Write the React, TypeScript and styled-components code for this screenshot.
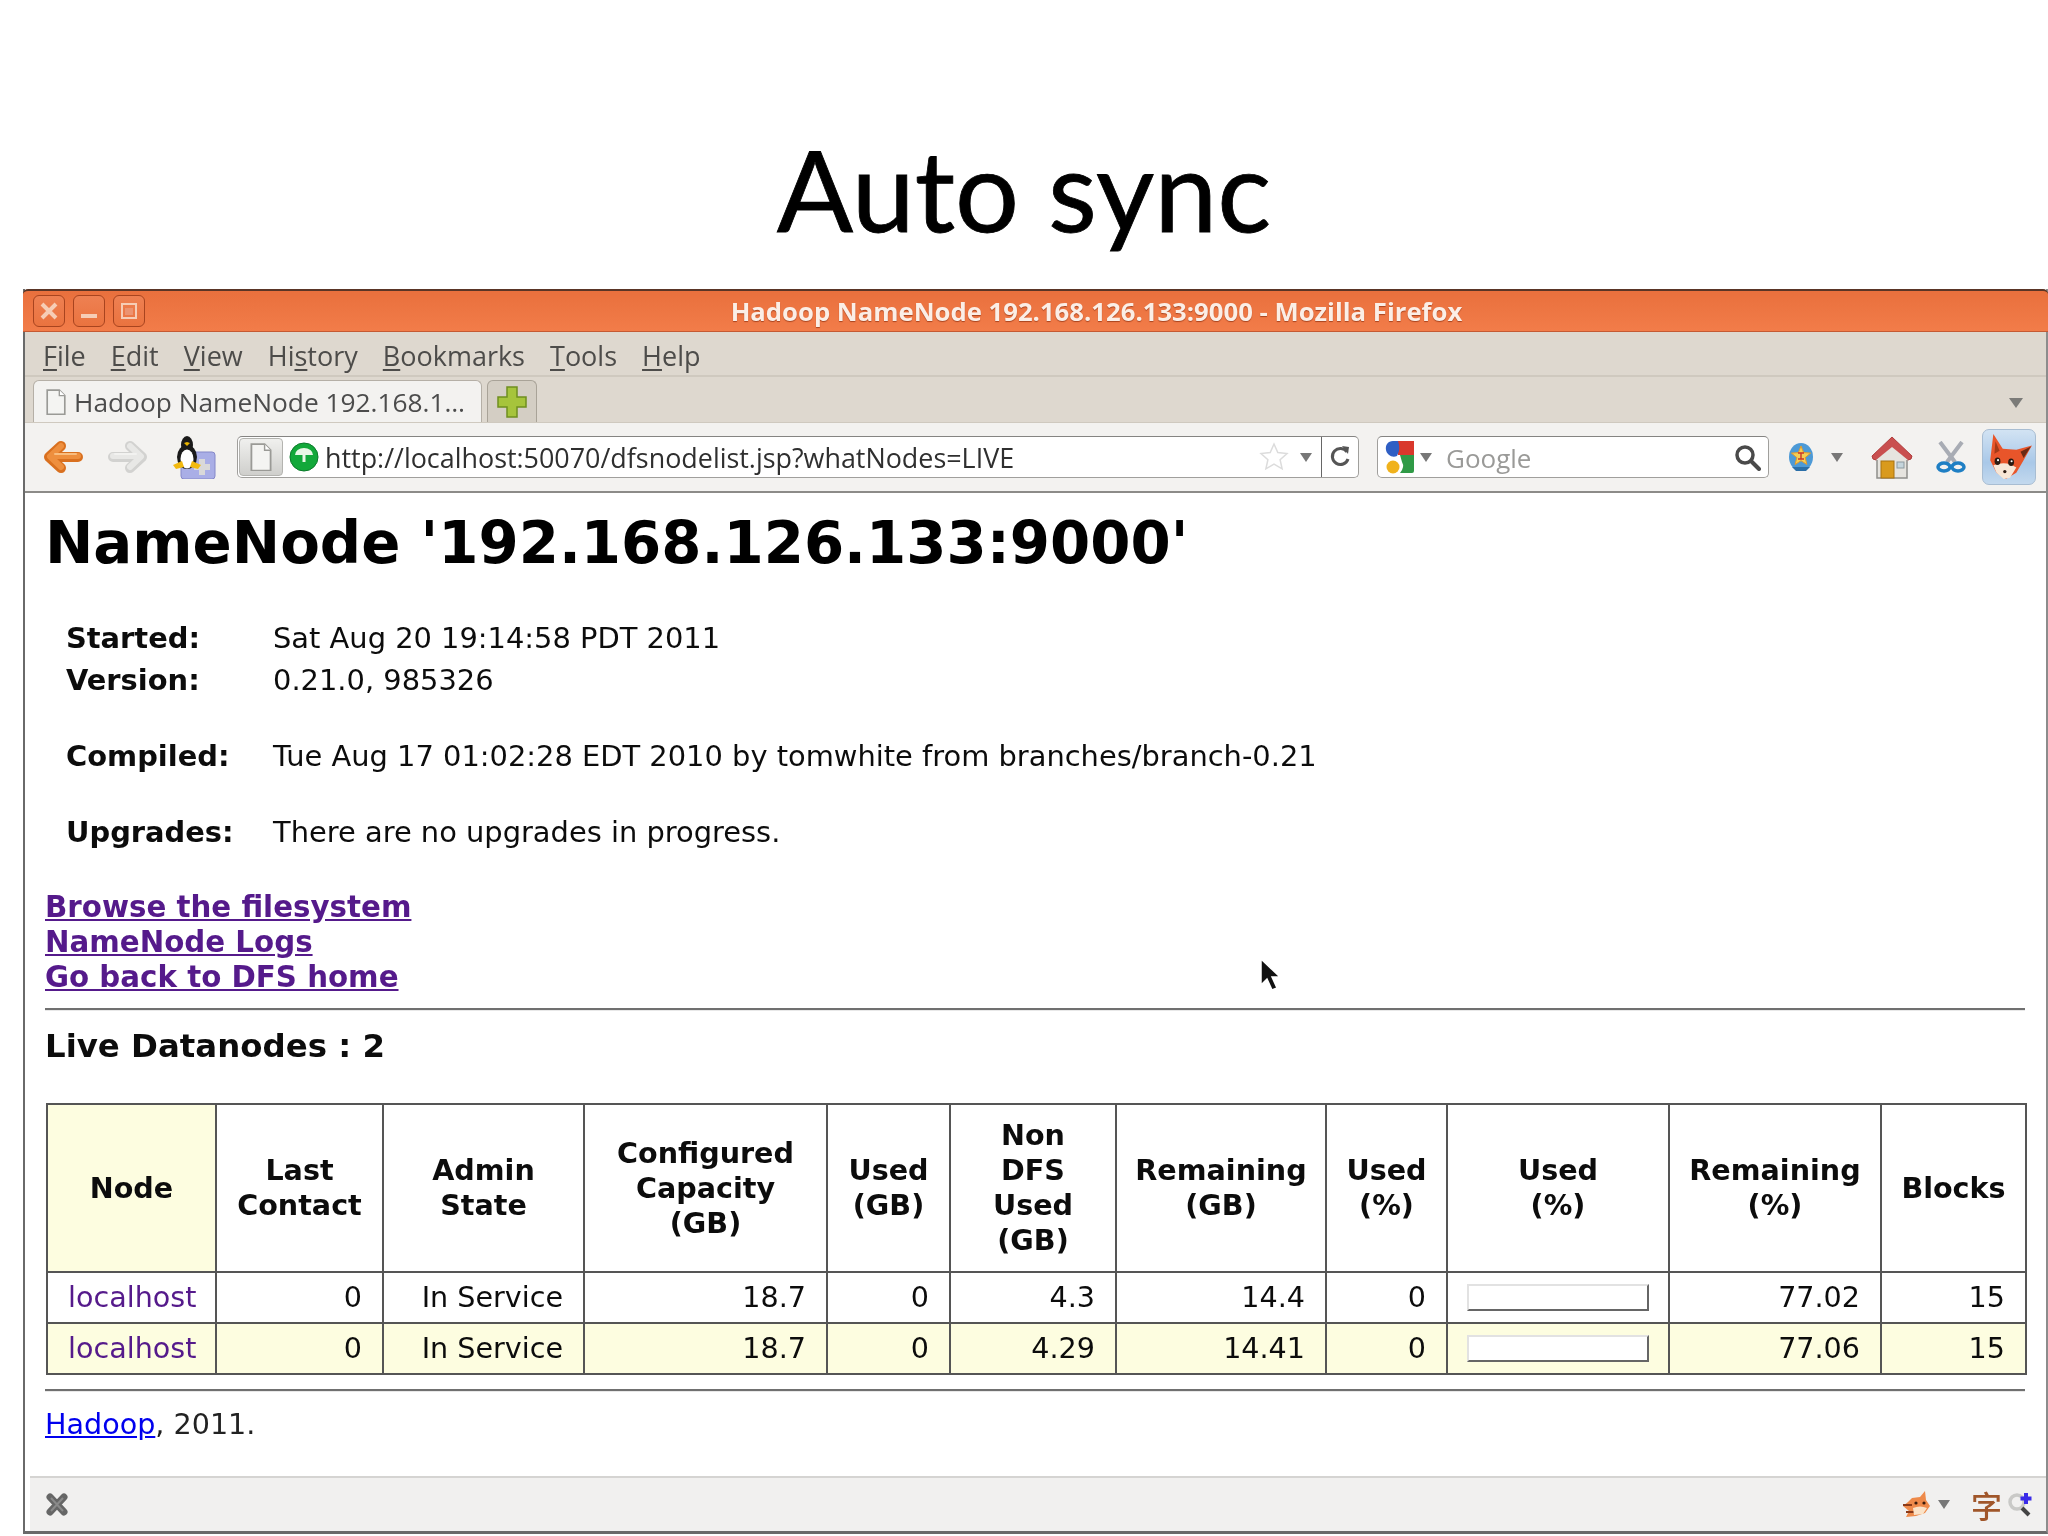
import React from 'react';
import styled, { createGlobalStyle } from 'styled-components';

const Global = createGlobalStyle`
  html, body { margin: 0; padding: 0; background: #fff; }
  body { width: 2048px; height: 1536px; overflow: hidden; font-family: "DejaVu Sans", sans-serif; }
`;

const Page = styled.div`
  position: relative;
  width: 2048px;
  height: 1536px;
  background: #fff;
`;
const SlideTitle = styled.h1`
  margin: 0;
  height: 289px;
  padding-top: 132px;
  box-sizing: border-box;
  text-align: center;
  font: 400 113px/1 Lato, "Open Sans", sans-serif;
  -webkit-text-stroke: 0.8px #000;
  color: #000;
`;
const Window = styled.div`
  margin-left: 23px;
  width: 2025px;
  height: 1245px;
  display: flex;
  flex-direction: column;
  border-left: 2px solid #6a6a6a;
  border-right: 2px solid #8c8c8c;
  border-bottom: 3px solid #6a6a6a;
  box-sizing: border-box;
  background: #fff;
  filter: blur(0.55px);
`;
const TitleBar = styled.div`
  height: 43px;
  flex: none;
  display: flex;
  align-items: center;
  padding-left: 10px;
  box-sizing: border-box;
  border-top: 2px solid #5a3526;
  border-bottom: 1px solid #c55a33;
  background: linear-gradient(#e9703d, #f27c49);
  margin: 0 -2px;
  border-radius: 5px 5px 0 0;
`;
const WinButtons = styled.div`
  display: flex;
  gap: 8px;
`;
const WinButton = styled.div`
  width: 32px;
  height: 32px;
  border: 1px solid #a8441f;
  border-radius: 6px;
  box-sizing: border-box;
  display: flex;
  align-items: center;
  justify-content: center;
  background: linear-gradient(#ee8052, #ea733f);
`;
const WinTitle = styled.div`
  flex: 1;
  padding-top: 2px;
  text-align: center;
  color: #fbeee6;
  font: 700 25.7px/1 "Open Sans", sans-serif;
  text-shadow: 0 1px 1px #a8441f;
`;
const MenuBar = styled.div`
  height: 45px;
  flex: none;
  display: flex;
  align-items: center;
  gap: 25px;
  padding: 3px 0 0 18px;
  box-sizing: border-box;
  background: #ded8cf;
  border-bottom: 2px solid #cfc9bf;
  color: #4d4c4a;
  font: 400 27px/1 "Open Sans", sans-serif;
  u { text-underline-offset: 3px; }
`;
const TabRow = styled.div`
  height: 46px;
  flex: none;
  display: flex;
  align-items: flex-end;
  padding-left: 8px;
  padding-right: 23px;
  box-sizing: border-box;
  background: #ded8cf;
  border-bottom: 1px solid #cfc9bf;
`;
const Tab = styled.div`
  width: 449px;
  height: 42px;
  box-sizing: border-box;
  display: flex;
  align-items: center;
  gap: 7px;
  padding: 1px 0 0 11px;
  background: #f3f2f0;
  border: 1px solid #b5afa6;
  border-bottom: none;
  border-radius: 6px 6px 0 0;
  color: #4c4c4c;
  font: 400 26.3px/1 "Open Sans", sans-serif;
  white-space: nowrap;
`;
const NewTab = styled.div`
  width: 50px;
  height: 42px;
  margin-left: 5px;
  box-sizing: border-box;
  display: flex;
  align-items: center;
  justify-content: center;
  background: #d4cec4;
  border: 1px solid #a9a398;
  border-bottom: none;
  border-radius: 6px 6px 0 0;
`;
const TabArrow = styled.div`
  margin-left: auto;
  margin-bottom: 14px;
  width: 0;
  height: 0;
  border-left: 7px solid transparent;
  border-right: 7px solid transparent;
  border-top: 10px solid #7b7b78;
`;
const NavBar = styled.div`
  height: 70px;
  flex: none;
  display: flex;
  align-items: center;
  box-sizing: border-box;
  background: #f3f2f0;
  border-bottom: 2px solid #8c8b88;
  padding-left: 18px;
`;
const NavSlot = styled.div<{ $w: number; $ml?: number; $mr?: number }>`
  width: ${p => p.$w}px;
  margin-left: ${p => p.$ml ?? 0}px;
  margin-right: ${p => p.$mr ?? 0}px;
  flex: none;
  display: flex;
  align-items: center;
  justify-content: center;
`;
const UrlBar = styled.div`
  width: 1122px;
  height: 42px;
  margin-left: 21px;
  flex: none;
  box-sizing: border-box;
  display: flex;
  align-items: center;
  background: #fff;
  border: 1px solid #a09f9c;
  border-top-color: #858482;
  border-radius: 5px;
`;
const PageChip = styled.div`
  width: 44px;
  height: 38px;
  margin-left: 1px;
  display: flex;
  align-items: center;
  justify-content: center;
  background: linear-gradient(#f0f0ee, #cfcfcc);
  border: 1px solid #b4b4b0;
  border-radius: 4px;
  box-sizing: border-box;
`;
const UrlText = styled.div`
  margin-left: 6px;
  padding-top: 2px;
  flex: 1;
  color: #2f2f2f;
  font: 400 26.9px/1 "Open Sans", sans-serif;
  white-space: nowrap;
`;
const SmallArrow = styled.div<{ $ml?: number }>`
  margin-left: ${p => p.$ml ?? 0}px;
  flex: none;
  width: 0;
  height: 0;
  border-left: 6px solid transparent;
  border-right: 6px solid transparent;
  border-top: 9px solid #777;
`;
const Reload = styled.div`
  margin-left: 9px;
  width: 36px;
  align-self: stretch;
  border-left: 1px solid #666;
  display: flex;
  align-items: center;
  justify-content: center;
`;
const SearchBar = styled(UrlBar)`
  width: 392px;
  margin-left: 18px;
`;
const SearchText = styled.div`
  margin-left: 14px;
  padding-top: 2px;
  flex: 1;
  color: #9a9a98;
  font: 400 26px/1 "Open Sans", sans-serif;
`;
const FoxButton = styled.div`
  width: 54px;
  height: 56px;
  margin-left: 16px;
  flex: none;
  display: flex;
  align-items: center;
  justify-content: center;
  box-sizing: border-box;
  background: linear-gradient(#d2e3f3, #a9c8e8 60%, #c3d9ee);
  border: 1px solid #a8bdd2;
  border-radius: 7px;
`;
const Content = styled.div`
  flex: 1;
  padding: 0 21px 0 20px;
  color: #0c0c0c;
  background: #fff;
  overflow: hidden;
`;
const Heading = styled.h1`
  margin: 16px 0 0;
  font: 700 57.8px/68px "DejaVu Sans", sans-serif;
  color: #000;
  white-space: nowrap;
`;
const InfoBlock = styled.div`
  margin: 40px 0 0 21px;
`;
const InfoRow = styled.div<{ $mt?: number }>`
  display: grid;
  grid-template-columns: 207px 1fr;
  height: 42px;
  align-items: center;
  margin-top: ${p => p.$mt ?? 0}px;
  font-size: 28.9px;
`;
const InfoLabel = styled.span`
  font-weight: 700;
`;
const LinkList = styled.div`
  margin-top: 37px;
  display: flex;
  flex-direction: column;
`;
const BoldLink = styled.a`
  font: 700 29.3px/35px "DejaVu Sans", sans-serif;
  color: #551a8b;
  text-decoration: underline;
`;
const Rule = styled.hr<{ $mt: number }>`
  margin: ${p => p.$mt}px 0 0;
  border: none;
  border-top: 2px solid #707070;
  border-bottom: 1px solid #e8e8e8;
`;
const Live = styled.h3`
  margin: 18px 0 0;
  font: 700 32.4px/35px "DejaVu Sans", sans-serif;
`;
const Table = styled.table`
  margin: 39px 0 0 1px;
  width: 1979px;
  table-layout: fixed;
  border-collapse: collapse;
  font-size: 28.6px;
`;
const Col = styled.col<{ $w: number }>`
  width: ${p => p.$w}px;
`;
const Th = styled.th<{ $node?: boolean }>`
  height: 166px;
  padding: 0 8px;
  border: 2px solid #555;
  font: 700 28.6px/35px "DejaVu Sans", sans-serif;
  text-align: center;
  background: ${p => (p.$node ? '#fdfde0' : '#fff')};
`;
const Tr = styled.tr<{ $alt?: boolean }>`
  background: ${p => (p.$alt ? '#fdfde0' : '#fff')};
`;
const Td = styled.td<{ $align?: string }>`
  height: 51px;
  padding: 0 20px 2px;
  box-sizing: border-box;
  border: 2px solid #555;
  text-align: ${p => p.$align ?? 'right'};
  white-space: nowrap;
`;
const NodeLink = styled.a`
  color: #551a8b;
  text-decoration: none;
`;
const Meter = styled.div`
  width: 182px;
  height: 27px;
  margin: 2px 0 0 -1px;
  box-sizing: border-box;
  background: #fff;
  border: 2px solid;
  border-color: #e2e2e2 #666 #666 #e2e2e2;
`;
const Footer = styled.div`
  margin-top: 14px;
  font-size: 28.6px;
  line-height: 36px;
  color: #222;
  a { color: #0000ee; text-decoration: underline; }
`;
const StatusBar = styled.div`
  height: 55px;
  flex: none;
  margin-left: 5px;
  display: flex;
  align-items: center;
  box-sizing: border-box;
  background: #f1f0ef;
  border-top: 2px solid #d5d4d2;
  padding: 0 12px 0 15px;
`;
const StatusRight = styled.div`
  margin-left: auto;
  display: flex;
  align-items: center;
  gap: 6px;
`;
const Glyph = styled.span`
  margin-left: 15px;
  color: #a0562a;
  font: 500 31px/1 "Noto Sans CJK SC", sans-serif;
`;
const Cursor = styled.svg`
  position: absolute;
  left: 1258px;
  top: 957px;
`;

const DocIcon = ({ s = 24 }: { s?: number }) => (
  <svg width={s} height={s * 1.2} viewBox="0 0 20 24">
    <path d="M2 1h11l5 5v17H2z" fill="#f4f4f2" stroke="#9a9a96" strokeWidth="1.5" />
    <path d="M13 1v5h5" fill="#fff" stroke="#9a9a96" strokeWidth="1.2" />
  </svg>
);
const Arrow = ({ dir, c1, c2, c3 }: { dir: 'l' | 'r'; c1: string; c2: string; c3: string }) => (
  <svg width="40" height="34" viewBox="0 0 40 34" fill="none" strokeLinecap="round" strokeLinejoin="round" style={dir === 'r' ? { transform: 'scaleX(-1)' } : undefined}>
    <path d="M35 17H8M18 6L6 17L18 28" stroke={c2} strokeWidth="10" />
    <path d="M35 16H8M18 6L7 16.5L18 27" stroke={c1} strokeWidth="6" />
    <path d="M33 14H12" stroke={c3} strokeWidth="2" />
  </svg>
);
const Tux = () => (
  <svg width="44" height="44" viewBox="0 0 44 44">
    <rect x="9" y="17" width="34" height="27" rx="3" fill="#a9aee6" stroke="#8488c9" />
    <path d="M30 24v16M22 32h16" stroke="#d9d9d9" strokeWidth="6" />
    <ellipse cx="15" cy="10" rx="6" ry="9" fill="#1a1a1a" />
    <ellipse cx="15" cy="22" rx="10" ry="12" fill="#1a1a1a" />
    <ellipse cx="15" cy="24" rx="6.5" ry="9.5" fill="#fff" />
    <path d="M12 8l3 3 3-3-3-1z" fill="#e8b400" />
    <path d="M1 30l9-4 2 6-8 2zM29 30l-9-4-2 6 8 2z" fill="#f2b90f" />
  </svg>
);
const GreenBall = () => (
  <svg width="30" height="30" viewBox="0 0 30 30">
    <circle cx="15" cy="15" r="14" fill="#12a83a" stroke="#0b7a2a" />
    <path d="M6 13a9 7 0 0 1 18 0z" fill="#e9f7e6" />
    <rect x="13.5" y="12" width="3" height="8" fill="#e9f7e6" />
  </svg>
);
const Star = () => (
  <svg width="30" height="30" viewBox="0 0 30 30">
    <path d="M15 2l3.8 8.5 9.2 1-6.9 6.2 2 9.1-8.1-4.7-8.1 4.7 2-9.1L2 11.5l9.2-1z" fill="#fff" stroke="#dcdcdc" strokeWidth="1.5" />
  </svg>
);
const ReloadIcon = () => (
  <svg width="22" height="26" viewBox="0 0 22 26" fill="none">
    <path d="M18 8a8 8 0 1 0 1 7" stroke="#555" strokeWidth="3" />
    <path d="M13 2l7 1-1 7z" fill="#555" />
  </svg>
);
const GoogleIcon = () => (
  <svg width="30" height="33" viewBox="0 0 30 33">
    <rect x="13" y="0" width="16" height="14" fill="#d9382c" />
    <path d="M15 14H29V30Q29 32 27 32H15Q20 26 17 21Z" fill="#2f9a46" />
    <path d="M13 0H8C3 0 0 4 1 9C2 14 7 17 12 15Q16 8 13 0Z" fill="#2f5fc4" />
    <circle cx="8" cy="26" r="6.5" fill="#f0b21c" />
  </svg>
);
const Magnifier = ({ s = 27, c = '#4a4a4a' }: { s?: number; c?: string }) => (
  <svg width={s} height={s} viewBox="0 0 27 27" fill="none">
    <circle cx="11" cy="11" r="8" stroke={c} strokeWidth="3.5" fill="#fff" />
    <path d="M17 17l8 8" stroke={c} strokeWidth="4" strokeLinecap="round" />
  </svg>
);
const Badge = () => (
  <svg width="26" height="30" viewBox="0 0 26 30">
    <ellipse cx="13" cy="15" rx="12" ry="14" fill="#4d9ad6" />
    <path d="M13 4l2.6 6.6 7 .5-5.4 4.5 1.7 6.9-5.9-3.8-5.9 3.8 1.7-6.9-5.4-4.5 7-.5z" fill="#f4cf56" stroke="#e39b2b" />
    <path d="M10 11h6M13 11v6M10 17h6" stroke="#c9352b" strokeWidth="1.4" />
    <path d="M4 25h18l-4 4H8z" fill="#2a6fa8" />
  </svg>
);
const House = () => (
  <svg width="42" height="43" viewBox="0 0 42 43">
    <rect x="6" y="20" width="30" height="22" fill="#e6e4df" stroke="#8f8f8b" strokeWidth="1.5" />
    <path d="M21 1 L41 20 Q41 24 37 24 L21 13 L5 24 Q1 24 1 20 Z" fill="#c94f4f" stroke="#b03e3e" />
    <path d="M21 11 L5 24 H37 Z" fill="#e6e4df" />
    <rect x="10" y="25" width="13" height="17" fill="#d99a1d" stroke="#a97210" />
    <rect x="26" y="26" width="7" height="6" fill="#c5d5dc" stroke="#8d9aa0" />
  </svg>
);
const Scissors = () => (
  <svg width="30" height="32" viewBox="0 0 30 32" fill="none">
    <path d="M4 1 L19 21 M26 1 L11 21" stroke="#a8acb4" strokeWidth="4" />
    <ellipse cx="8" cy="26" rx="6" ry="4" stroke="#1e7fc4" strokeWidth="3.5" />
    <ellipse cx="22" cy="26" rx="6" ry="4" stroke="#1e7fc4" strokeWidth="3.5" />
  </svg>
);
const Fox = ({ s = 48 }: { s?: number }) => (
  <svg width={s} height={s} viewBox="0 0 46 46">
    <path d="M8 1 L17 15 L30 16 L45 12 L37 26 L30 38 L20 44 L11 38 L5 26 Z" fill="#e8552a" />
    <path d="M34 18 L44 13 L37 24 Z" fill="#6b2a14" />
    <path d="M10 8 L14 17 L9 20 Z" fill="#a33a18" />
    <path d="M8 31 Q20 26 30 33 L24 43 L18 44 L11 38 Z" fill="#f7e6d6" />
    <ellipse cx="12" cy="27" rx="2.8" ry="3.6" fill="#2a1a12" />
    <ellipse cx="25" cy="28" rx="2.8" ry="3.6" fill="#2a1a12" />
    <circle cx="12.5" cy="26" r="1" fill="#fff" />
    <circle cx="25.5" cy="27" r="1" fill="#fff" />
    <circle cx="19" cy="37" r="1.6" fill="#2a1a12" />
  </svg>
);
const MiniFox = () => (
  <svg width="30" height="27" viewBox="0 0 30 27">
    <path d="M10 7 L18 6 L23 0 L24 9 L28 15 L23 22 L14 25 L4 26 L7 20 L1 15 L6 11 Z" fill="#ee8a4a" />
    <path d="M1 14h9M4 21h9" stroke="#8a3a18" strokeWidth="2" />
    <path d="M11 17 Q18 14 25 17 L21 23 L12 24 Z" fill="#fbe3c8" />
    <circle cx="14" cy="12" r="1.6" fill="#3a1c0c" />
    <circle cx="22" cy="12" r="1.6" fill="#3a1c0c" />
  </svg>
);
const StatusMag = () => (
  <svg width="26" height="27" viewBox="0 0 26 27" fill="none">
    <circle cx="9" cy="11" r="7" stroke="#c9c9c7" strokeWidth="3.5" />
    <path d="M14 17l7 7" stroke="#444" strokeWidth="4" />
    <path d="M18 2v11M12.5 7.5h11" stroke="#3a2be8" strokeWidth="4" />
  </svg>
);
const CloseCross = () => (
  <svg width="24" height="23" viewBox="0 0 24 23">
    <path d="M5 4L19 19M19 4L5 19" stroke="#666" strokeWidth="7" fill="none" strokeLinecap="round" />
    <path d="M6 5L18 18M18 5L6 18" stroke="#8a8a8a" strokeWidth="2" fill="none" />
  </svg>
);

const headers = ['Node', 'Last Contact', 'Admin State', 'Configured Capacity (GB)', 'Used (GB)', 'Non DFS Used (GB)', 'Remaining (GB)', 'Used (%)', 'Used (%)', 'Remaining (%)', 'Blocks'];
const widths = [169, 167, 201, 243, 123, 166, 210, 121, 222, 212, 145];
const rows = [
  ['0', 'In Service', '18.7', '0', '4.3', '14.4', '0', '77.02', '15'],
  ['0', 'In Service', '18.7', '0', '4.29', '14.41', '0', '77.06', '15'],
];
const menus: [string, string, string][] = [
  ['', 'F', 'ile'], ['', 'E', 'dit'], ['', 'V', 'iew'], ['Hi', 's', 'tory'], ['', 'B', 'ookmarks'], ['', 'T', 'ools'], ['', 'H', 'elp'],
];

export default function App() {
  return (
    <Page>
      <Global />
      <SlideTitle>Auto sync</SlideTitle>
      <Window>
        <TitleBar>
          <WinButtons>
            <WinButton>
              <svg width="20" height="20" viewBox="0 0 20 20"><path d="M3 3l14 14M17 3L3 17" stroke="#f6cdb6" strokeWidth="4" /></svg>
            </WinButton>
            <WinButton>
              <svg width="18" height="18" viewBox="0 0 18 18"><rect x="1" y="12" width="16" height="4" fill="#f6cdb6" /></svg>
            </WinButton>
            <WinButton>
              <svg width="18" height="18" viewBox="0 0 18 18"><rect x="2" y="2" width="14" height="14" fill="none" stroke="#f6cdb6" strokeWidth="2" /><rect x="5" y="6" width="8" height="7" fill="#ec9370" /></svg>
            </WinButton>
          </WinButtons>
          <WinTitle>Hadoop NameNode 192.168.126.133:9000 - Mozilla Firefox</WinTitle>
        </TitleBar>
        <MenuBar>
          {menus.map(([a, b, c]) => (
            <span key={b + c}>{a}<u>{b}</u>{c}</span>
          ))}
        </MenuBar>
        <TabRow>
          <Tab><DocIcon s={22} />Hadoop NameNode 192.168.1…</Tab>
          <NewTab>
            <svg width="30" height="32" viewBox="0 0 30 32"><path d="M10 1h10v10h9v10h-9v10H10V21H1V11h9z" fill="#a6c43c" stroke="#6f8f1f" strokeWidth="1.5" /></svg>
          </NewTab>
          <TabArrow />
        </TabRow>
        <NavBar>
          <NavSlot $w={40}><Arrow dir="l" c1="#ee8f3e" c2="#d9701f" c3="#f8bd7f" /></NavSlot>
          <NavSlot $w={40} $ml={25}><Arrow dir="r" c1="#e8e8e6" c2="#d2d2d0" c3="#f2f2f0" /></NavSlot>
          <NavSlot $w={44} $ml={24}><Tux /></NavSlot>
          <UrlBar>
            <PageChip><DocIcon s={24} /></PageChip>
            <NavSlot $w={30} $ml={6}><GreenBall /></NavSlot>
            <UrlText>http://localhost:50070/dfsnodelist.jsp?whatNodes=LIVE</UrlText>
            <Star />
            <SmallArrow $ml={11} />
            <Reload><ReloadIcon /></Reload>
          </UrlBar>
          <SearchBar>
            <NavSlot $w={30} $ml={7}><GoogleIcon /></NavSlot>
            <SmallArrow $ml={5} />
            <SearchText>Google</SearchText>
            <NavSlot $w={27} $mr={7}><Magnifier /></NavSlot>
          </SearchBar>
          <NavSlot $w={26} $ml={19}><Badge /></NavSlot>
          <SmallArrow $ml={17} />
          <NavSlot $w={42} $ml={28}><House /></NavSlot>
          <NavSlot $w={30} $ml={23}><Scissors /></NavSlot>
          <FoxButton><Fox /></FoxButton>
        </NavBar>
        <Content>
          <Heading>NameNode '192.168.126.133:9000'</Heading>
          <InfoBlock>
            <InfoRow><InfoLabel>Started:</InfoLabel><span>Sat Aug 20 19:14:58 PDT 2011</span></InfoRow>
            <InfoRow><InfoLabel>Version:</InfoLabel><span>0.21.0, 985326</span></InfoRow>
            <InfoRow $mt={34}><InfoLabel>Compiled:</InfoLabel><span>Tue Aug 17 01:02:28 EDT 2010 by tomwhite from branches/branch-0.21</span></InfoRow>
            <InfoRow $mt={34}><InfoLabel>Upgrades:</InfoLabel><span>There are no upgrades in progress.</span></InfoRow>
          </InfoBlock>
          <LinkList>
            <BoldLink href="#">Browse the filesystem</BoldLink>
            <BoldLink href="#">NameNode Logs</BoldLink>
            <BoldLink href="#">Go back to DFS home</BoldLink>
          </LinkList>
          <Rule $mt={13} />
          <Live>Live Datanodes : 2</Live>
          <Table>
            <colgroup>
              {widths.map((w, i) => <Col key={i} $w={w} />)}
            </colgroup>
            <thead>
              <tr>
                {headers.map((h, i) => (
                  <Th key={i} $node={i === 0}>
                    {h.split(' ').map((word, j) => <React.Fragment key={j}>{j > 0 && <br />}{word}</React.Fragment>)}
                  </Th>
                ))}
              </tr>
            </thead>
            <tbody>
              {rows.map((r, ri) => (
                <Tr key={ri} $alt={ri === 1}>
                  <Td $align="center"><NodeLink href="#">localhost</NodeLink></Td>
                  {r.slice(0, 7).map((v, i) => <Td key={i}>{v}</Td>)}
                  <Td><Meter /></Td>
                  {r.slice(7).map((v, i) => <Td key={i}>{v}</Td>)}
                </Tr>
              ))}
            </tbody>
          </Table>
          <Rule $mt={14} />
          <Footer><a href="#">Hadoop</a>, 2011.</Footer>
        </Content>
        <StatusBar>
          <CloseCross />
          <StatusRight>
            <MiniFox />
            <SmallArrow />
            <Glyph>字</Glyph>
            <StatusMag />
          </StatusRight>
        </StatusBar>
      </Window>
      <Cursor width="24" height="36" viewBox="0 0 24 36">
        <path d="M3 2 V28 L9 22 L14 33 L19 31 L14 20 L22 20 Z" fill="#111" stroke="#fff" strokeWidth="1.5" />
      </Cursor>
    </Page>
  );
}
